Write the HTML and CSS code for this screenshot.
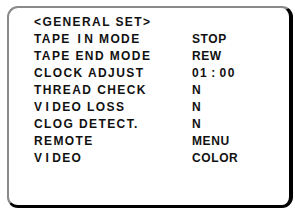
FILE: index.html
```html
<!DOCTYPE html>
<html lang="en">
<head>
    <meta charset="UTF-8">
    <title>General Set</title>
    <link rel="stylesheet" href="styles.css">
</head>
<body>
    <div class="screen">
        <div class="title">&lt;GENERAL SET&gt;</div>
        <div class="menu">
            <div class="label">TAPE <span class="wide">I</span>N MODE</div>
            <div class="value">STOP</div>
            <div class="label">TAPE END MODE</div>
            <div class="value">REW</div>
            <div class="label">CLOCK ADJUST</div>
            <div class="value time">01<span class="colon">:</span>00</div>
            <div class="label">THREAD CHECK</div>
            <div class="value">N</div>
            <div class="label">V<span class="wide">I</span>DEO LOSS</div>
            <div class="value">N</div>
            <div class="label">CLOG DETECT.</div>
            <div class="value">N</div>
            <div class="label">REMOTE</div>
            <div class="value">MENU</div>
            <div class="label">V<span class="wide">I</span>DEO</div>
            <div class="value">COLOR</div>
        </div>
    </div>
</body>
</html>
```

FILE: styles.css
```css
/* General styles */
body {
    margin: 0;
    padding: 0;
    background-color: #fff;
    font-family: "Liberation Sans", Arial, sans-serif;
    font-weight: bold;
    font-size: 12px;
    color: #111;
}
.screen {
    box-sizing: border-box;
    width: 286px;
    height: 202px;
    margin: 6px 0 0 7px;
    padding: 6px 0 0 25px;
    border-top: 2px solid #8a8a8a;
    border-left: 2px solid #8a8a8a;
    border-right: 4px solid #000;
    border-bottom: 3px solid #000;
    border-radius: 11px;
}
.title,
.label {
    line-height: 17px;
    letter-spacing: 1.4px;
}
.menu {
    display: grid;
    grid-template-columns: 158px auto;
}
.value {
    line-height: 17px;
    letter-spacing: 0.6px;
}
.wide {
    margin: 0 2px;
}
.time {
    letter-spacing: 1.4px;
}
.colon {
    margin: 0 3px;
}
```
